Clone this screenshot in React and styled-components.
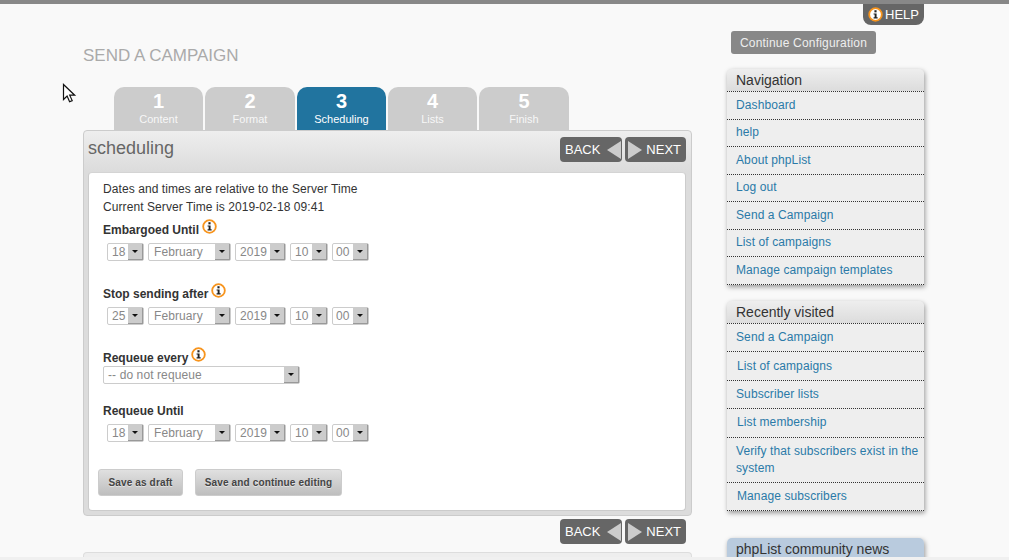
import React from 'react';
import styled, { createGlobalStyle } from 'styled-components';

const GlobalStyle = createGlobalStyle`
  html, body {
    margin: 0;
    padding: 0;
    height: 560px;
    overflow: hidden;
    background: #f9f9f9;
    font-family: "Liberation Sans", Arial, sans-serif;
  }
`;

const Page = styled.div`
  position: relative;
  height: 560px;
  overflow: hidden;
  border-top: 4px solid #888;
  box-sizing: border-box;
  display: flex;
  padding-left: 83px;
  gap: 35px;
`;

const Cursor = styled.svg`
  position: absolute;
  left: 62px;
  top: 79px;
`;

const HelpTab = styled.div`
  position: absolute;
  left: 863px;
  top: 0;
  width: 61px;
  height: 21px;
  box-sizing: border-box;
  background: #666;
  border-radius: 0 0 8px 8px;
  color: #fff;
  font-size: 13px;
  display: flex;
  align-items: center;
  gap: 2px;
  padding-left: 5px;
`;

const BottomStrip = styled.div`
  position: absolute;
  left: 0;
  right: 0;
  bottom: 0;
  height: 3px;
  background: #f0f0f0;
`;

const Main = styled.main`
  width: 609px;
  flex: none;
`;

const Title = styled.h1`
  margin: 0;
  padding-top: 43px;
  height: 40px;
  font-size: 17px;
  line-height: 18px;
  font-weight: normal;
  color: #aaa;
`;

const Tabs = styled.div`
  display: flex;
  gap: 2px;
  padding-left: 31px;
  height: 43px;
`;

const Tab = styled.div`
  width: ${p => p.$w}px;
  box-sizing: border-box;
  border-radius: 10px 10px 0 0;
  background: ${p => (p.$active ? '#21749f' : '#ccc')};
  color: #fff;
  text-align: center;
  padding-top: 4px;
`;

const TabNumber = styled.div`
  font-size: 20px;
  line-height: 21px;
  font-weight: bold;
`;

const TabName = styled.div`
  font-size: 11px;
  line-height: 14px;
  opacity: ${p => (p.$active ? 1 : 0.85)};
`;

const Panel = styled.section`
  box-sizing: border-box;
  height: 386px;
  border: 1px solid #ccc;
  border-radius: 4px;
  background: linear-gradient(#eee, #dcdcdc 40px, #dcdcdc);
  padding: 0 5px 4px 4px;
  display: flex;
  flex-direction: column;
`;

const PanelHead = styled.div`
  height: 41px;
  flex: none;
  display: flex;
  justify-content: space-between;
  padding-top: 6px;
  box-sizing: border-box;
`;

const PanelTitle = styled.h2`
  margin: -1px 0 0;
  font-size: 18px;
  line-height: 24px;
  font-weight: normal;
  color: #666;
`;

const StepNav = styled.div`
  display: flex;
  gap: 3px;
  height: 25px;
  justify-content: flex-end;
`;

const StepButton = styled.div`
  width: ${p => p.$w}px;
  height: 25px;
  box-sizing: border-box;
  background: #666;
  border-radius: 4px;
  color: #fff;
  font-size: 13px;
  display: flex;
  align-items: center;
  justify-content: space-between;
  padding: ${p => p.$pad};
`;

const Arrow = styled.svg`
  flex: none;
`;

const Content = styled.div`
  flex: 1;
  background: #fff;
  border: 1px solid #ccc;
  border-top-color: #d4d4d4;
  border-radius: 4px;
  padding: 7px 14px 0 14px;
  font-size: 12px;
  color: #333;
  display: flex;
  flex-direction: column;
`;

const Note = styled.div`
  line-height: 18px;
  height: 18px;
  letter-spacing: 0.08px;
  &:nth-child(2) { margin-bottom: 2px; }
`;

const Label = styled.label`
  display: flex;
  align-items: flex-end;
  height: 20px;
  font-weight: bold;
  margin-top: ${p => p.$top || 0}px;
  line-height: 15px;
  gap: 3px;
`;

const InfoIcon = styled.svg`
  flex: none;
  margin-bottom: 4px;
`;

const DateRow = styled.div`
  display: flex;
  gap: 4px;
  margin: 5px 0 0 4px;
`;

const FakeSelect = styled.div`
  width: ${p => p.$w}px;
  height: 18px;
  box-sizing: border-box;
  flex: none;
  border: 1px solid #ccc;
  border-radius: 2px;
  background: #fff;
  color: #888;
  line-height: 16px;
  padding-left: ${p => p.$pad || 4}px;
  display: flex;
  justify-content: space-between;
  letter-spacing: 0.1px;
`;

const SelectArrow = styled.span`
  flex: none;
  width: 15px;
  height: 16px;
  background: #ccc;
  border-right: 1px solid #999;
  border-bottom: 1px solid #999;
  box-sizing: border-box;
  display: flex;
  align-items: center;
  justify-content: center;
  &::after {
    content: '';
    border: 3px solid transparent;
    border-top: 3px solid #111;
    border-bottom: 0;
  }
`;

const ButtonRow = styled.div`
  display: flex;
  gap: 12px;
  margin: 27px 0 0 -5px;
`;

const SaveButton = styled.button`
  width: ${p => p.$w}px;
  height: 27px;
  flex: none;
  padding: 0;
  border: 1px solid #ccc;
  border-radius: 3px;
  background: linear-gradient(#e0e0e0, #bebebe);
  color: #444;
  font-family: inherit;
  font-size: 10px;
  font-weight: bold;
  letter-spacing: 0.15px;
  text-shadow: 0 1px 0 rgba(255, 255, 255, 0.5);
`;

const BottomNav = styled.div`
  margin: 3px 6px 0 0;
`;

const NextPanel = styled.div`
  height: 12px;
  margin-top: 8px;
  border: 1px solid #ddd;
  border-bottom: 0;
  border-radius: 4px 4px 0 0;
  background: #eee;
`;

const Sidebar = styled.aside`
  width: 197px;
  flex: none;
  display: flex;
  flex-direction: column;
`;

const ContinueButton = styled.div`
  align-self: flex-start;
  margin: 27px 0 15px 4px;
  width: 145px;
  height: 23px;
  background: #888;
  border-radius: 3px;
  color: #eee;
  font-size: 12px;
  letter-spacing: 0.2px;
  line-height: 24px;
  text-align: center;
`;

const Box = styled.nav`
  background: #eee;
  border-radius: 5px 5px 0 0;
  box-shadow: 1px 2px 5px rgba(0, 0, 0, 0.4);
  margin-bottom: ${p => p.$gap}px;
  flex: none;
`;

const BoxTitle = styled.h3`
  margin: 0;
  height: 22px;
  padding-left: 9px;
  font-size: 14px;
  line-height: 22px;
  font-weight: normal;
  color: #333;
  border-radius: 5px 5px 0 0;
  background: ${p => (p.$news ? '#b9cbde' : 'linear-gradient(#eee, #dcdcdc)')};
  border-bottom: ${p => (p.$news ? '0' : '1px dotted #333')};
`;

const BoxLink = styled.a`
  display: block;
  padding: ${p => p.$pad}px 5px;
  padding-left: ${p => (p.$indent ? 10 : 9)}px;
  font-size: 12px;
  line-height: 17px;
  letter-spacing: 0.1px;
  color: #2a7aa8;
  border-bottom: 1px dotted #333;
`;

const infoPaths = (
  <>
    <circle cx="7" cy="7" r="5.9" fill="#fff" stroke="#f7941d" strokeWidth="1.7" />
    <rect x="6" y="3" width="2" height="2" fill="#222" />
    <path d="M5.2 6h2.8v3.6h1v1.1H5.2V9.6h1V7.1h-1z" fill="#222" />
  </>
);

const Info = () => (
  <InfoIcon width="15" height="15" viewBox="0 0 14 14">
    {infoPaths}
  </InfoIcon>
);

const DateSelects = ({ day }) => (
  <DateRow>
    <FakeSelect $w={37}>{day}<SelectArrow /></FakeSelect>
    <FakeSelect $w={83} $pad={5}>February<SelectArrow /></FakeSelect>
    <FakeSelect $w={51}>2019<SelectArrow /></FakeSelect>
    <FakeSelect $w={38}>10<SelectArrow /></FakeSelect>
    <FakeSelect $w={37} $pad={3}>00<SelectArrow /></FakeSelect>
  </DateRow>
);

const Steps = () => (
  <StepNav>
    <StepButton $w={62} $pad="0 1px 0 5px">
      BACK
      <Arrow width="14" height="18" viewBox="0 0 14 18"><path d="M14 0v18L0 9z" fill="#ccc" /></Arrow>
    </StepButton>
    <StepButton $w={61} $pad="0 5px 0 3px">
      <Arrow width="14" height="18" viewBox="0 0 14 18"><path d="M0 0v18l14-9z" fill="#ccc" /></Arrow>
      NEXT
    </StepButton>
  </StepNav>
);

const tabs = [
  { n: 1, name: 'Content', w: 89 },
  { n: 2, name: 'Format', w: 90 },
  { n: 3, name: 'Scheduling', w: 89, active: true },
  { n: 4, name: 'Lists', w: 89 },
  { n: 5, name: 'Finish', w: 90 },
];

const navLinks = [
  'Dashboard',
  'help',
  'About phpList',
  'Log out',
  'Send a Campaign',
  'List of campaigns',
  'Manage campaign templates',
];

const recentLinks = [
  { text: 'Send a Campaign' },
  { text: 'List of campaigns', indent: true },
  { text: 'Subscriber lists' },
  { text: 'List membership', indent: true },
  { text: 'Verify that subscribers exist in the system' },
  { text: 'Manage subscribers', indent: true },
];

const App = () => (
  <>
    <GlobalStyle />
    <Page>
      <Cursor width="16" height="22" viewBox="0 0 16 22">
        <path d="M1.5 1.5v15l3.6-3.4 2.5 5.6 2.6-1.1-2.5-5.4h5z" fill="#fff" stroke="#111" strokeWidth="1.2" />
      </Cursor>
      <HelpTab>
        <svg width="15" height="15" viewBox="0 0 14 14">{infoPaths}</svg>
        HELP
      </HelpTab>

      <Main>
        <Title>SEND A CAMPAIGN</Title>
        <Tabs>
          {tabs.map(tab => (
            <Tab key={tab.n} $w={tab.w} $active={tab.active}>
              <TabNumber>{tab.n}</TabNumber>
              <TabName $active={tab.active}>{tab.name}</TabName>
            </Tab>
          ))}
        </Tabs>
        <Panel>
          <PanelHead>
            <PanelTitle>scheduling</PanelTitle>
            <Steps />
          </PanelHead>
          <Content>
            <Note>Dates and times are relative to the Server Time</Note>
            <Note>Current Server Time is 2019-02-18 09:41</Note>
            <Label>Embargoed Until <Info /></Label>
            <DateSelects day="18" />
            <Label $top={21}>Stop sending after <Info /></Label>
            <DateSelects day="25" />
            <Label $top={21}>Requeue every <Info /></Label>
            <FakeSelect $w={197}>-- do not requeue<SelectArrow /></FakeSelect>
            <Label $top={15}>Requeue Until</Label>
            <DateSelects day="18" />
            <ButtonRow>
              <SaveButton $w={85}>Save as draft</SaveButton>
              <SaveButton $w={147}>Save and continue editing</SaveButton>
            </ButtonRow>
          </Content>
        </Panel>
        <BottomNav>
          <Steps />
        </BottomNav>
        <NextPanel />
      </Main>

      <Sidebar>
        <ContinueButton>Continue Configuration</ContinueButton>
        <Box $gap={16.5}>
          <BoxTitle>Navigation</BoxTitle>
          {navLinks.map(text => (
            <BoxLink key={text} $pad={4.75}>{text}</BoxLink>
          ))}
        </Box>
        <Box $gap={26.6}>
          <BoxTitle>Recently visited</BoxTitle>
          {recentLinks.map(link => (
            <BoxLink key={link.text} $pad={5.2} $indent={link.indent}>{link.text}</BoxLink>
          ))}
        </Box>
        <Box $gap={0}>
          <BoxTitle $news>phpList community news</BoxTitle>
        </Box>
      </Sidebar>
      <BottomStrip />
    </Page>
  </>
);

export default App;
